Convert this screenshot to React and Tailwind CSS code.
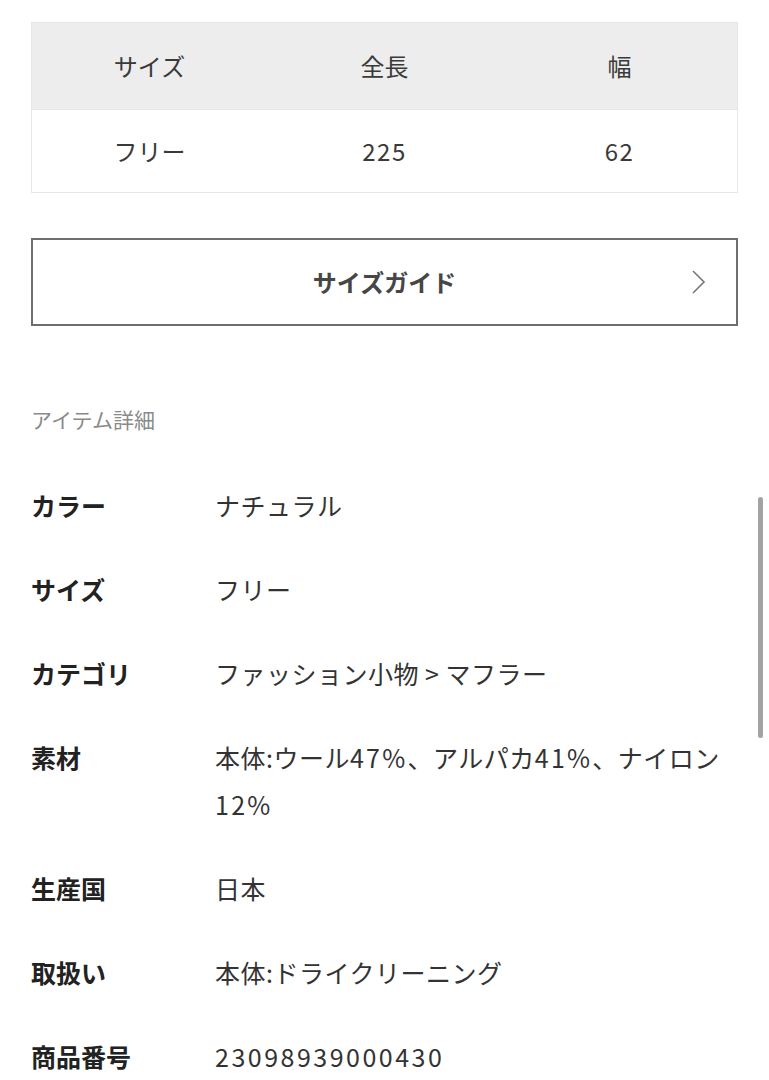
export default function App() {
  const font = { fontFamily: '"Noto Sans CJK JP", "Noto Sans", sans-serif' }
  // digits in the reference are wider than Noto's, so numbers get a bit of tracking
  const num = (t) => <span className="tracking-[0.09em]">{t}</span>
  const details = [
    ['カラー', 'ナチュラル'],
    ['サイズ', 'フリー'],
    ['カテゴリ', 'ファッション小物 > マフラー'],
    ['素材', <>本体:ウール{num('47%')}、アルパカ{num('41%')}、ナイロン{num('12%')}</>],
    ['生産国', '日本'],
    ['取扱い', '本体:ドライクリーニング'],
    ['商品番号', <span className="tracking-[0.1em]">23098939000430</span>],
  ]

  return (
    <div className="relative w-[769px] h-[1080px] overflow-hidden bg-white text-[#333]" style={font}>
      <div className="px-[31px] pt-[22px]">
        {/* size table */}
        <div className="border border-[#e6e6e6]">
          <div className="grid grid-cols-3 h-[86px] bg-[#ededed] text-[24px] text-[#3a3a3a] items-center text-center">
            <span>サイズ</span>
            <span>全長</span>
            <span>幅</span>
          </div>
          <div className="grid grid-cols-3 h-[83px] border-t border-[#e6e6e6] text-[24px] text-[#3a3a3a] items-center text-center">
            <span>フリー</span>
            <span className="tracking-[0.06em]">225</span>
            <span className="tracking-[0.06em]">62</span>
          </div>
        </div>

        {/* size guide button */}
        <div className="mt-[45px] h-[88px] border-2 border-[#6e6e6e] flex items-center justify-center relative">
          <span className="text-[24px] font-bold text-[#464646]">サイズガイド</span>
          <svg className="absolute right-[28px] top-1/2 -translate-y-1/2" width="18" height="26" viewBox="0 0 18 26" fill="none">
            <path d="M3 2 L14 13 L3 24" stroke="#777" strokeWidth="1.6" />
          </svg>
        </div>

        <div className="mt-[78px] text-[21px] leading-[30px] text-[#8a8a8a]">アイテム詳細</div>

        {/* item details */}
        <div className="mt-[48px] flex flex-col gap-[37px]">
          {details.map(([k, v]) => (
            <div key={k} className="flex text-[25px] leading-[47px]">
              <div className="w-[184px] shrink-0 font-bold text-[#222]">{k}</div>
              <div className="flex-1 text-[#333] tracking-[0.02em]">{v}</div>
            </div>
          ))}
        </div>
      </div>

      {/* scrollbar */}
      <div className="absolute left-[758px] top-[497px] w-[5px] h-[241px] rounded-full bg-[#a3a3a3]" />
    </div>
  )
}
